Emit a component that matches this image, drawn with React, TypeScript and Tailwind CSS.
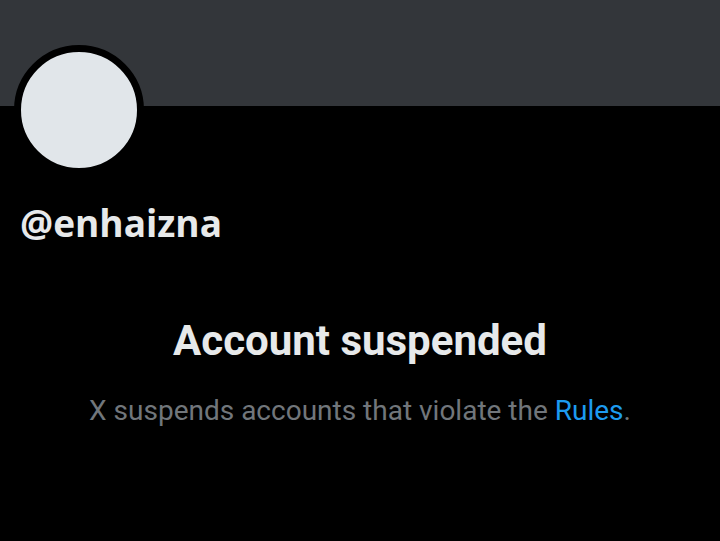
export default function App() {
  return (
    <div className="h-[541px] w-[720px] overflow-hidden bg-black">
      <div className="h-[106px] bg-[#33363a]" />
      <div className="px-[14px]">
        <div className="-mt-[61px] h-[130px] w-[130px] rounded-full border-[7px] border-black bg-[#e1e6ea]" />
        <div className="ml-[6px] mt-[24px] font-['Open_Sans',sans-serif] text-[37px] font-bold leading-[48px] text-[#e7e9ea]">
          @enhaizna
        </div>
      </div>
      <div className="mt-[68px] flex flex-col items-center font-['Roboto',sans-serif]">
        <h1 className="text-[42px] font-bold leading-[52px] text-[#e7e9ea]">Account suspended</h1>
        <p className="mt-[26px] text-[28px] leading-[36px] text-[#71767b]">
          X suspends accounts that violate the <span className="text-[#1d9bf0]">Rules</span>.
        </p>
      </div>
    </div>
  );
}
